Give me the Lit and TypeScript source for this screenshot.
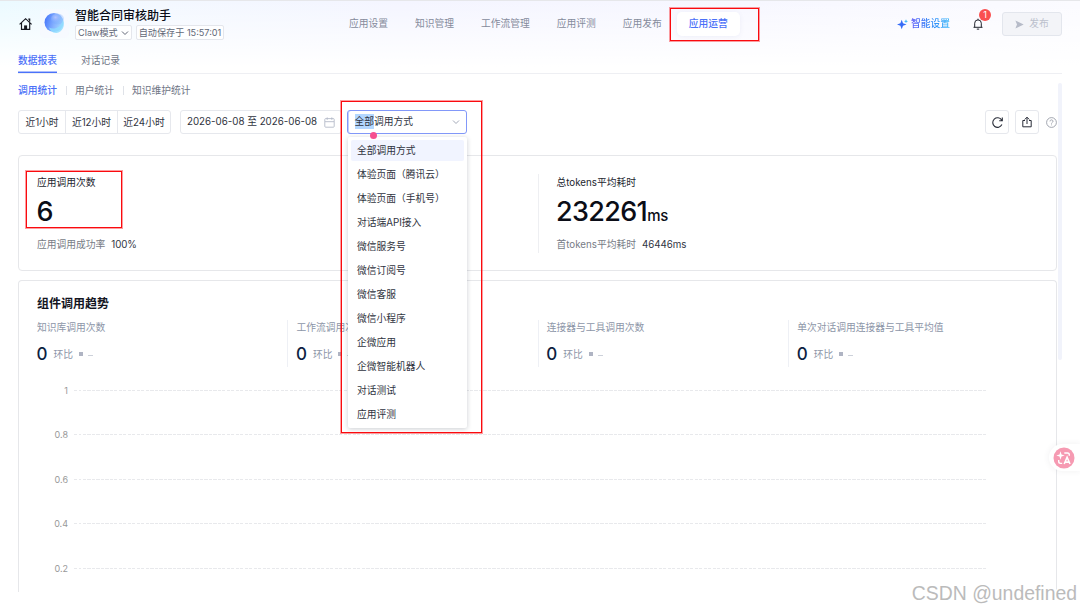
import { LitElement, html, css, svg } from "lit";
import { customElement } from "lit/decorators.js";
import { classMap } from "lit/directives/class-map.js";

const NAV = ["应用设置", "知识管理", "工作流管理", "应用评测", "应用发布", "应用运营"];
const CHANNELS = [
  "全部调用方式", "体验页面（腾讯云）", "体验页面（手机号）", "对话端API接入", "微信服务号", "微信订阅号",
  "微信客服", "微信小程序", "企微应用", "企微智能机器人", "对话测试", "应用评测",
];
const METRICS = ["知识库调用次数", "工作流调用次数", "连接器与工具调用次数", "单次对话调用连接器与工具平均值"];
const TICKS = ["1", "0.8", "0.6", "0.4", "0.2"];

const homeIcon = svg`<svg width="14" height="14" viewBox="0 0 14 14" fill="none" stroke="#15171f" stroke-width="1.15"><path d="M.6 7.300 6.600 1.700l6 5.600M2.500 5.800v6.500h8.200V5.800M9.300 2.100h1.400v2.400"/><path d="M5.100 8.400h3v3.900h-3z" fill="#15171f" stroke="none"/></svg>`;
const chevron = (w: number, c: string) => html`<svg width=${w} height=${w} viewBox="0 0 8 8" fill="none" stroke=${c} stroke-width="1"><path d="m1 2.500 3 3 3-3"/></svg>`;

@customElement("page-header")
export class PageHeader extends LitElement {
  static styles = css`
    :host { display: flex; height: 46px; box-sizing: border-box; align-items: center; padding: 0 18px 0 19px; }
    .home { width: 14px; height: 14px; }
    .home svg, .logo svg { display: block; }
    .logo { width: 29px; height: 29px; margin: 0 6px 0 7px; border-radius: 5px; background: rgba(248, 248, 255, .55); flex: none; position: relative; top: -1px; }
    .ident { width: 262px; flex: none; display: flex; flex-direction: column; }
    .title { font-size: 12px; line-height: 16px; font-weight: 500; color: #0b0d17; white-space: nowrap; }
    .tags { display: flex; gap: 4px; margin-top: 1px; }
    .tag { box-sizing: border-box; height: 15px; border: 1px solid #e4e6ec; border-radius: 2px; background: rgba(255,255,255,.8); padding: 0 2px; font-size: 9.150px; line-height: 13px; color: #626877; display: flex; align-items: center; gap: 4px; white-space: nowrap; }
    .mode { gap: 3px; }
    nav { display: flex; gap: 3px; }
    .item { padding: 0 12px; height: 24px; line-height: 24px; border-radius: 5px; font-size: 9.750px; color: #858b9c; white-space: nowrap; }
    .active { background: #fff; color: #4a70f8; font-weight: 500; box-shadow: 0 1px 5px rgba(70, 80, 150, .07); }
    .actions { margin-left: auto; display: flex; align-items: center; }
    .smart { display: flex; align-items: center; gap: 3px; font-size: 9.750px; line-height: 24px; font-weight: 500; margin-right: 22px; }
    .smarttext { background: linear-gradient(90deg, #5f59f8, #2b80f8 45%, #3ab8fa); background-clip: text; -webkit-background-clip: text; color: transparent; }
    .bell { position: relative; width: 12px; height: 14px; margin-right: 18px; }
    .badge { position: absolute; left: 7px; top: -8px; width: 12px; height: 12px; border-radius: 50%; background: #fa4f50; color: #fff; font-size: 9px; line-height: 12px; text-align: center; }
    .publish { box-sizing: border-box; width: 60px; height: 24px; border: 1px solid #e3e6ed; border-radius: 3px; background: #f3f4f8; color: #bcc1cd; display: flex; align-items: center; justify-content: center; gap: 5px; font-size: 9.750px; line-height: 22px; }
  `;
  render() {
    return html`
      <div class="home">${homeIcon}</div>
      <div class="logo"><svg width="29" height="29" viewBox="0 0 29 29">
        <defs><linearGradient id="a" x1="0" y1=".3" x2="1" y2=".6"><stop stop-color="#4776fb"/><stop offset=".55" stop-color="#86b2fe"/><stop offset="1" stop-color="#a6dcff"/></linearGradient>
        <radialGradient id="b" cx=".35" cy=".35"><stop stop-color="#b3c3ff"/><stop offset="1" stop-color="#75a8ff" stop-opacity=".3"/></radialGradient></defs>
        <circle cx="14" cy="13.500" r="9.500" fill="url(#a)"/><ellipse cx="17.500" cy="10" rx="6.500" ry="5.500" fill="url(#b)"/><path d="M9 18.500c5 2.500 12 .5 13.800-7.500 3 5-.5 12.500-6.500 12.900C12 24 9.800 21 9 18.500z" fill="#8edcff" opacity=".8"/></svg></div>
      <div class="ident">
        <div class="title">智能合同审核助手</div>
        <div class="tags"><span class="tag mode">Claw模式 ${chevron(8, "#626877")}</span><span class="tag">自动保存于 15:57:01</span></div>
      </div>
      <nav>${NAV.map((n, i) => html`<span class=${classMap({ item: true, active: i === NAV.length - 1 })}>${n}</span>`)}</nav>
      <div class="actions">
        <div class="smart"><svg width="11" height="11" viewBox="0 0 11 11"><path d="M4.700 .8 6 4.300 9.500 5.500 6 6.700 4.700 10.200 3.400 6.700 0 5.500 3.400 4.300z" fill="#356bf7"/><path d="m9 .3.6 1.400 1.400.6-1.400.6L9 4.300l-.6-1.400L7 2.300l1.400-.6z" fill="#44baf8"/></svg><span class="smarttext">智能设置</span></div>
        <div class="bell"><svg width="12" height="14" viewBox="0 0 12 14" fill="none" stroke="#20232d" stroke-width="1"><path d="M1.500 10.300h9M2.700 10.300V6.200a3.300 3.300 0 0 1 6.600 0v4.100M6 2.900V1.700M4.800 12.100h2.400"/></svg><span class="badge">1</span></div>
        <div class="publish"><svg width="9" height="9" viewBox="0 0 9 9"><path d="M.4.500 8.700 4.500.4 8.500 2 4.500z" fill="#b6bbc8"/></svg>发布</div>
      </div>`;
  }
}

@customElement("filter-bar")
export class FilterBar extends LitElement {
  static styles = css`
    :host { display: flex; height: 24px; align-items: center; font-size: 9.750px; color: #2f3340; }
    .box { box-sizing: border-box; height: 24px; border: 1px solid #e6e8ed; border-radius: 3px; background: #fff; }
    .ranges { display: flex; width: 153px; }
    .range { box-sizing: border-box; line-height: 24px; text-align: center; width: 52px; white-space: nowrap; }
    .range + .range { border-left: 1px solid #e6e8ed; }
    .short { width: 46px; }
    .last { flex: 1; }
    .date { width: 162px; margin-left: 9px; padding: 0 6px; display: flex; align-items: center; justify-content: space-between; white-space: nowrap; line-height: 24px; }
    .select { position: relative; width: 120px; margin-left: 5px; border-color: #8298f9; padding: 0 6px; display: flex; align-items: center; justify-content: space-between; line-height: 24px; box-shadow: inset 1px 0 0 #c3cdfd; }
    .picked { padding-left: .5px; }
    .sel { background: #b3d7ff; display: inline-block; line-height: 15px; }
    .menu { position: absolute; z-index: 5; left: 0; top: 26px; width: 119px; box-sizing: border-box; background: #fff; padding: 3px; border-radius: 2px; display: flex; flex-direction: column; gap: 3px; box-shadow: 0 1px 5px rgba(20, 30, 50, .22); }
    .option { box-sizing: border-box; height: 21px; line-height: 22px; padding-left: 6px; border-radius: 2px; white-space: nowrap; }
    .current { background: #f1f4ff; }
    .dot { position: absolute; z-index: 6; left: 21.500px; top: 21px; width: 7px; height: 7px; border-radius: 50%; background: #f6508f; }
    .tools { margin-left: auto; margin-right: -1px; display: flex; align-items: center; }
    .tool { width: 24px; display: flex; align-items: center; justify-content: center; margin-right: 6px; }
  `;
  render() {
    return html`
      <div class="box ranges"><span class="range short">近1小时</span><span class="range">近12小时</span><span class="range last">近24小时</span></div>
      <div class="box date"><span>2026-06-08 至 2026-06-08</span><svg width="11" height="11" viewBox="0 0 11 11" fill="none" stroke="#b4bac8" stroke-width=".9"><rect x=".8" y="1.600" width="9.400" height="8.600" rx=".8"/><path d="M1 4.700h9M3.200.4v2.400M7.800.4v2.400"/></svg></div>
      <div class="box select"><span class="picked"><span class="sel">全部</span>调用方式</span>${chevron(8, "#a3a9b8")}
        <span class="dot"></span>
        <div class="menu">${CHANNELS.map((c, i) => html`<div class=${classMap({ option: true, current: i === 0 })}>${c}</div>`)}</div>
      </div>
      <div class="tools">
        <span class="box tool"><svg width="13" height="13" viewBox="0 0 13 13" fill="none" stroke="#282c38" stroke-width="1.100"><path d="M10.900 8.600A4.800 4.800 0 1 1 10.600 4L11 4.500M11.300 1.600v3.100H8.200"/></svg></span>
        <span class="box tool"><svg width="12" height="12" viewBox="0 0 12 12" fill="none" stroke="#282c38" stroke-width="1"><path d="M4 4.500H1.800v6.300h8.400V4.500H8M6 8V1.300M3.700 3.500 6 1.200l2.300 2.300"/></svg></span>
        <svg width="13" height="13" viewBox="0 0 13 13" fill="none" stroke="#8b909d" stroke-width=".8"><circle cx="6.500" cy="6.500" r="4.900"/><path d="M5 5.400c0-2 3-2 3 0 0 1-1.500 1-1.500 2.200M6.500 8.500v.8"/></svg>
      </div>`;
  }
}

@customElement("summary-card")
export class SummaryCard extends LitElement {
  static styles = css`
    :host { display: grid; grid-template-columns: 1fr 1fr; box-sizing: border-box; height: 116px; border: 1px solid #e6e7ea; border-radius: 4px; padding: 18px 0; background: #fff; }
    .stat { padding-left: 18px; font-size: 9.750px; line-height: 16px; color: #23262f; }
    .stat + .stat { border-left: 1px solid #eeeff2; }
    .name { padding-top: 1px; }
    .value { font-size: 27px; line-height: 32px; height: 32px; margin-top: 5px; font-weight: 500; color: #0b0d17; letter-spacing: -.65px; margin-left: -.5px; }
    .unit { font-size: 15px; letter-spacing: -.2px; }
    .sub { margin-top: 9px; color: #777c86; }
    .subvalue { margin-left: 6px; color: #2f3442; letter-spacing: -.05px; }
  `;
  render() {
    return html`
      <div class="stat"><div class="name">应用调用次数</div><div class="value">6</div><div class="sub">应用调用成功率<span class="subvalue">100%</span></div></div>
      <div class="stat"><div class="name">总tokens平均耗时</div><div class="value">232261<span class="unit">ms</span></div><div class="sub">首tokens平均耗时<span class="subvalue">46446ms</span></div></div>`;
  }
}

@customElement("trend-card")
export class TrendCard extends LitElement {
  static styles = css`
    :host { display: block; box-sizing: border-box; height: 312px; border: 1px solid #e6e7ea; border-bottom: 0; border-radius: 4px 4px 0 0; padding: 14px 18px 0; background: #fff; overflow: hidden; }
    .title { font-size: 12px; line-height: 18px; font-weight: 700; color: #14161f; }
    .metrics { display: grid; grid-template-columns: repeat(4, 250.400px); margin-top: 7px; }
    .metric { box-sizing: border-box; height: 47px; font-size: 9.750px; line-height: 16px; color: #8d96a8; }
    .metric + .metric { border-left: 1px solid #eef0f5; padding-left: 8px; }
    .line { display: flex; align-items: center; margin-top: 7px; height: 22px; }
    .num { width: 17px; font-size: 17px; font-weight: 500; color: #0e1f42; margin-left: -.5px; }
    .ratio { padding-top: 1px; }
    .sq { width: 4px; height: 4px; background: #afb4c3; margin: 0 5px 0 6px; }
    .dash { width: 5px; height: 1px; background: #cdd1da; margin-top: 2px; }
    .chart { padding-right: 51px; margin-top: 1.300px; }
    .tick { display: flex; align-items: center; height: 44.400px; }
    .label { width: 31px; text-align: right; font-size: 9px; color: #999; margin-right: 6px; }
    .rule { flex: 1; height: 1px; background: repeating-linear-gradient(90deg, #e8e9ec 0 3px, transparent 3px 4.500px); }
  `;
  render() {
    return html`
      <div class="title">组件调用趋势</div>
      <div class="metrics">${METRICS.map((m) => html`<div class="metric"><div>${m}</div><div class="line"><span class="num">0</span><span class="ratio">环比</span><span class="sq"></span><span class="dash"></span></div></div>`)}</div>
      <div class="chart">${TICKS.map((t) => html`<div class="tick"><span class="label">${t}</span><span class="rule"></span></div>`)}</div>`;
  }
}

@customElement("app-root")
export class AppRoot extends LitElement {
  static styles = css`
    :host { display: block; position: relative; width: 1080px; height: 610px; overflow: hidden; box-sizing: border-box; border-top: 1px solid #e6e7ea;
      font-family: Inter, "Noto Sans CJK SC", sans-serif; font-size: 9.750px;
      background: linear-gradient(180deg, rgba(255,255,255,0), #fff 66px), linear-gradient(90deg, #ebfaff 0, #f3f8ff 160px, #f4f5ff 400px, #f7f7ff 750px, #fbfbff 1080px); }
    .tabs { display: flex; gap: 24px; height: 27px; margin: 0 18px; box-sizing: border-box; border-bottom: 1px solid #eeeff3; color: #6e7484; }
    .tab { height: 26px; box-sizing: border-box; line-height: 27px; }
    .on { color: #4a70f8; font-weight: 500; border-bottom: 1px solid #4a72fa; box-shadow: inset 0 -1px 0 rgba(74, 114, 250, .45); }
    .subtabs { display: flex; align-items: center; height: 16px; margin: 9px 18px 11px; line-height: 16px; color: #6e7484; }
    .sub + .sub { margin-left: 9px; padding-left: 9px; background: linear-gradient(#dfe2e8, #dfe2e8) 0 3px / 1px 9px no-repeat; }
    .current { color: #4a70f8; font-weight: 500; }
    .body { margin: 0 23px 0 18px; }
    summary-card { margin-top: 21px; }
    trend-card { margin-top: 9px; }
    .scroll { position: absolute; left: 1058px; top: 82px; width: 4px; height: 277px; border-radius: 2px; background: #f1f3fb; z-index: -1; }
    .fab { position: absolute; right: 0; top: 443px; width: 31px; height: 27px; border-radius: 14px 0 0 14px; background: #fff; box-shadow: 0 0 6px rgba(60, 60, 80, .08); display: flex; align-items: center; }
    .fab svg { margin-left: 3.500px; }
    .mark { position: absolute; box-sizing: border-box; border: 1px solid #fa0a0e; z-index: 10; box-shadow: 0 0 0 1px rgba(250, 10, 14, .4); }
    .marknav { left: 670px; top: 7px; width: 89px; height: 33px; }
    .markstat { left: 26px; top: 170px; width: 96px; height: 57px; }
    .markmenu { left: 341px; top: 100px; width: 141px; height: 332px; }
    .water { position: absolute; right: 3px; top: 580px; font: 19.400px/24px "Liberation Sans", Arial, sans-serif; color: #bbb; text-shadow: -1px -1px 0 #fff, 1px 1px 0 #fff; white-space: nowrap; }
    .layer { position: relative; z-index: 0; }
  `;
  render() {
    return html`
      <div class="layer">
        <page-header></page-header>
        <div class="tabs"><span class="tab on">数据报表</span><span class="tab">对话记录</span></div>
        <div class="subtabs"><span class="sub current">调用统计</span><span class="sub">用户统计</span><span class="sub">知识维护统计</span></div>
        <div class="body"><filter-bar></filter-bar><summary-card></summary-card><trend-card></trend-card></div>
        <div class="scroll"></div>
      </div>
      <div class="fab"><svg width="22" height="22" viewBox="0 0 22 22" fill="none" stroke="#fff"><circle cx="11" cy="11" r="10.500" fill="#f69ab2" stroke="none"/><path d="M7.500 4.300 8.500 7.500 11.700 8.500 8.500 9.500 7.500 12.700 6.500 9.500 3.300 8.500 6.500 7.500z" fill="#fff" stroke="none"/><path d="M11.300 6h3.200a1.800 1.800 0 0 1 1.800 1.800v1M5.700 13v1.600a1.800 1.800 0 0 0 1.800 1.800h1.700" stroke-width="1.400"/><path d="m11.200 17 2.900-6.800L17 17M12.200 15.100H16" stroke-width="1.600"/></svg></div>
      <div class="mark marknav"></div><div class="mark markstat"></div><div class="mark markmenu"></div>
      <div class="water">CSDN @undefined</div>`;
  }
}
